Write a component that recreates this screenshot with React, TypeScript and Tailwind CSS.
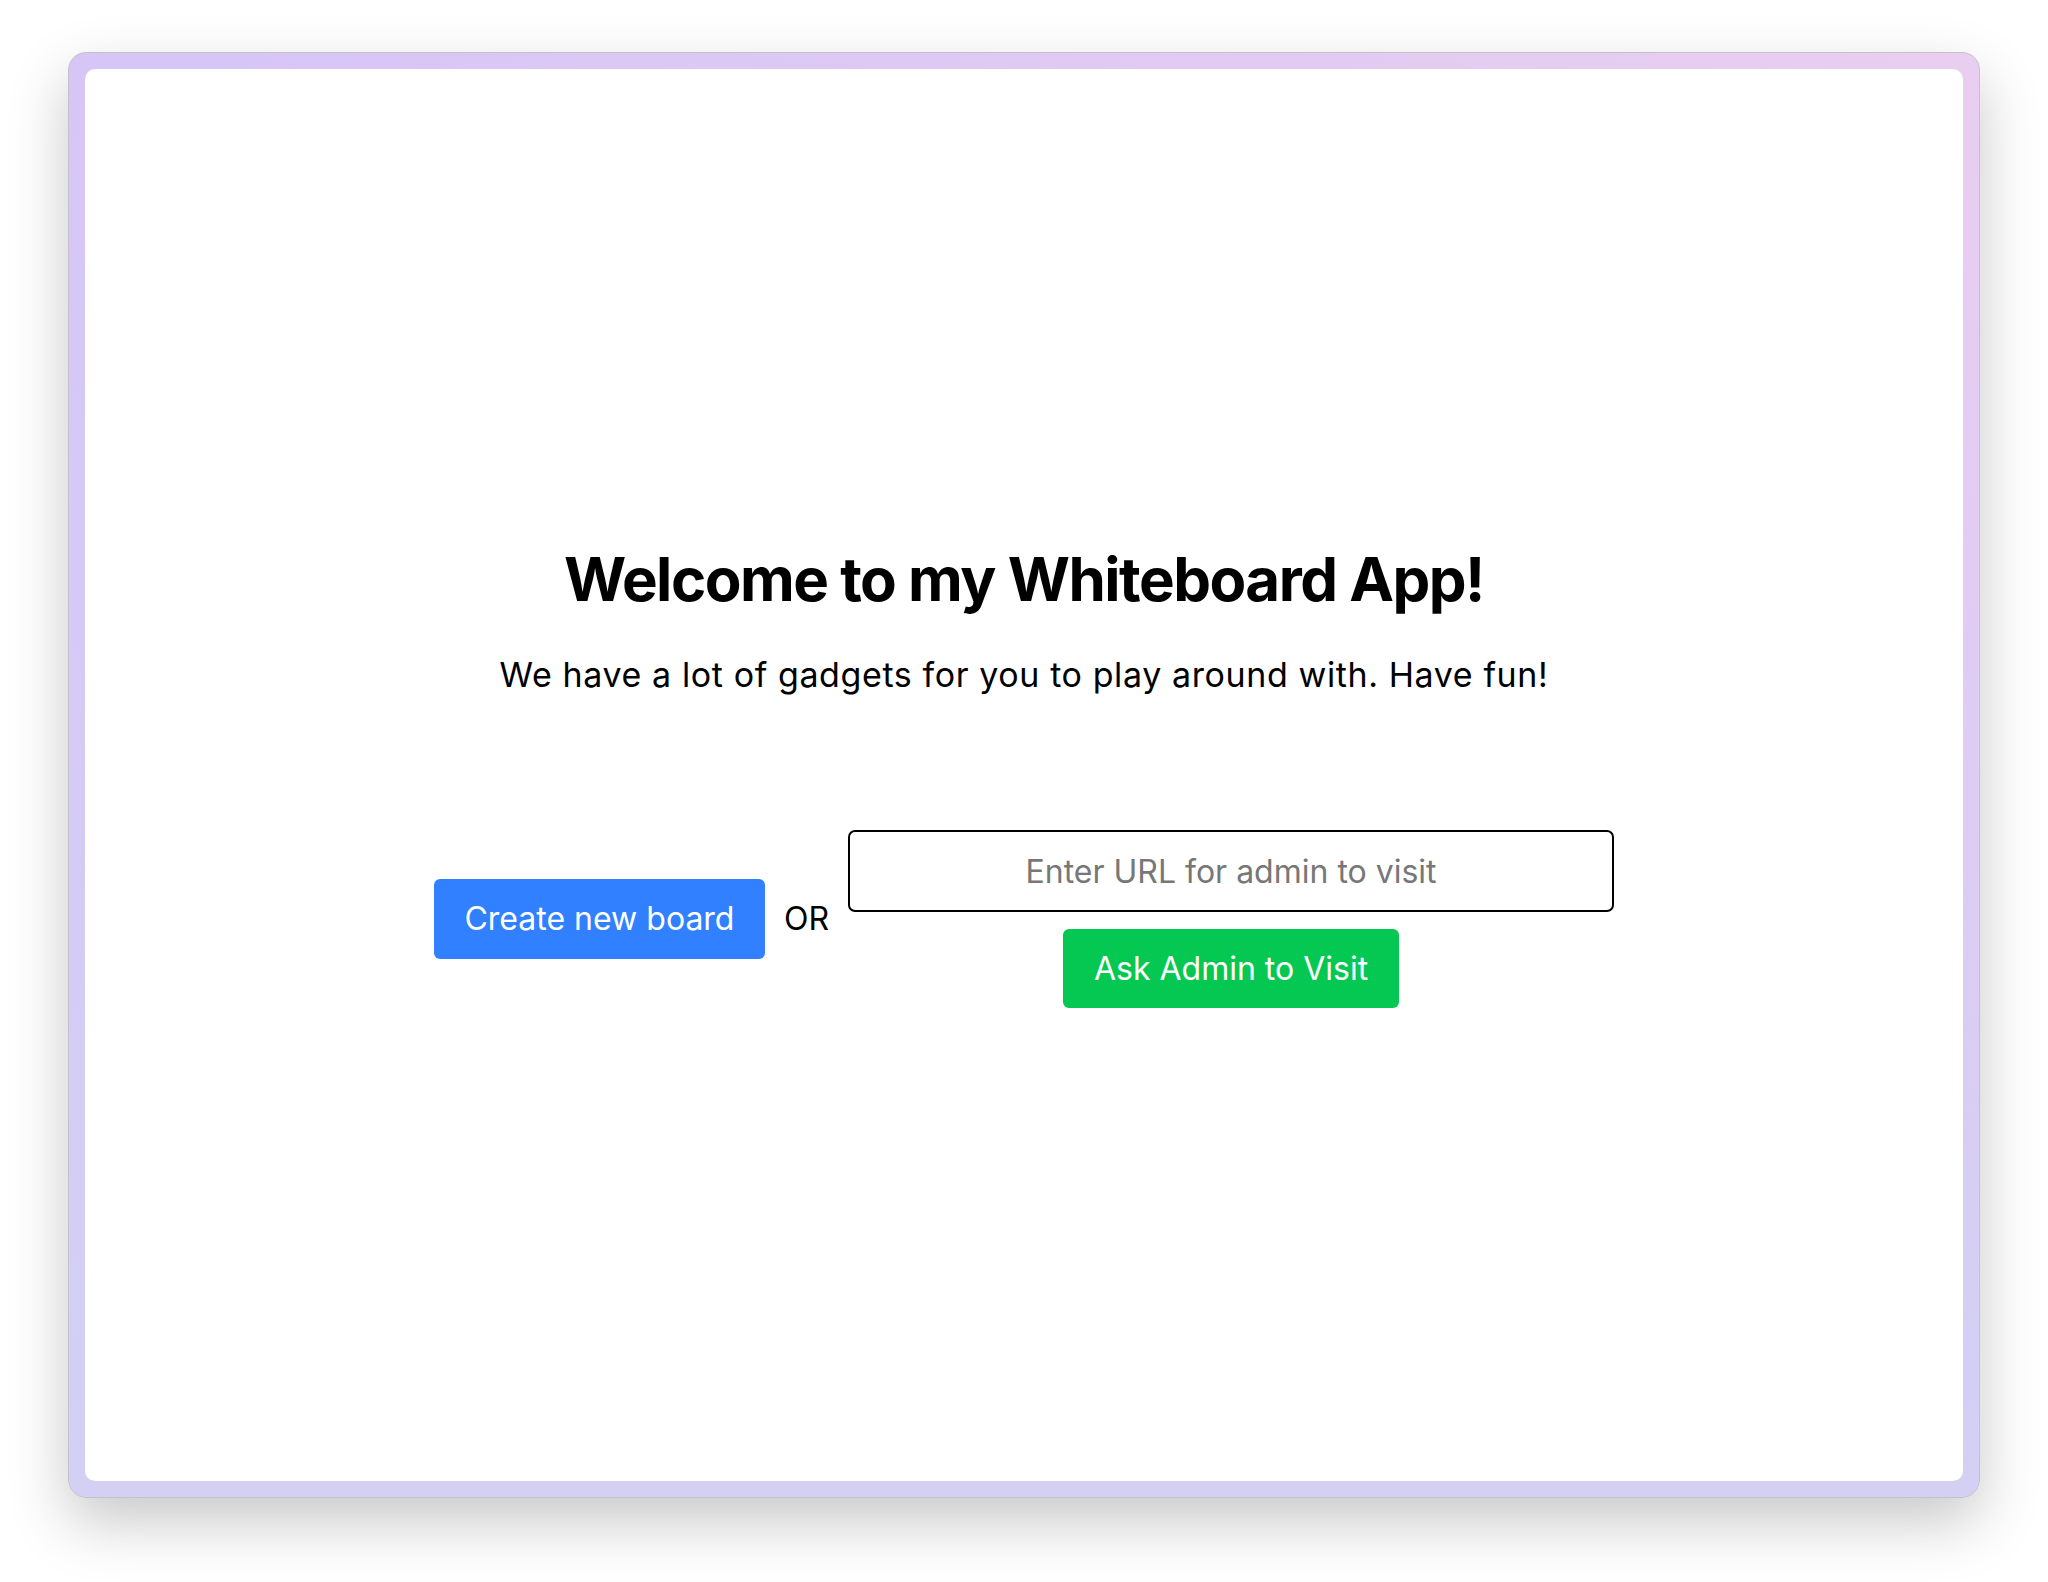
import React from "react";

export default function App() {
  return (
    <div className="w-[2048px] h-[1582px] bg-white pt-[52px] pl-[68px] font-['Inter',sans-serif]">
      <div className="w-[1912px] h-[1446px] rounded-[18px] p-[16px] border border-[#c4c0cc] bg-[radial-gradient(ellipse_at_top_right,#e9cef0,transparent_65%),linear-gradient(to_bottom,#d6c6f6,#d3d0f4)] shadow-[0_24px_60px_rgba(0,0,0,0.22)]">
        <div className="w-full h-full bg-white rounded-[10px] flex flex-col items-center justify-center">
          <h1 className="text-[60px] leading-[75px] font-bold text-black tracking-[-1.5px]">
            Welcome to my Whiteboard App!
          </h1>
          <p className="mt-[38px] text-[34px] leading-[39px] text-black tracking-[0.6px]">
            We have a lot of gadgets for you to play around with. Have fun!
          </p>
          <div className="mt-[136px] flex items-center gap-[19px]">
            <button className="w-[331px] h-[80px] rounded-[6px] bg-[#3080ff] text-white text-[32px]">
              Create new board
            </button>
            <span className="text-[32px] text-black">OR</span>
            <div className="flex flex-col items-center gap-[17px]">
              <input
                className="w-[766px] h-[82px] rounded-[7px] border-2 border-black text-center text-[32px] placeholder:text-[#777777] outline-none"
                placeholder="Enter URL for admin to visit"
              />
              <button className="w-[336px] h-[79px] rounded-[6px] bg-[#05c853] text-white text-[32px]">
                Ask Admin to Visit
              </button>
            </div>
          </div>
        </div>
      </div>
    </div>
  );
}
